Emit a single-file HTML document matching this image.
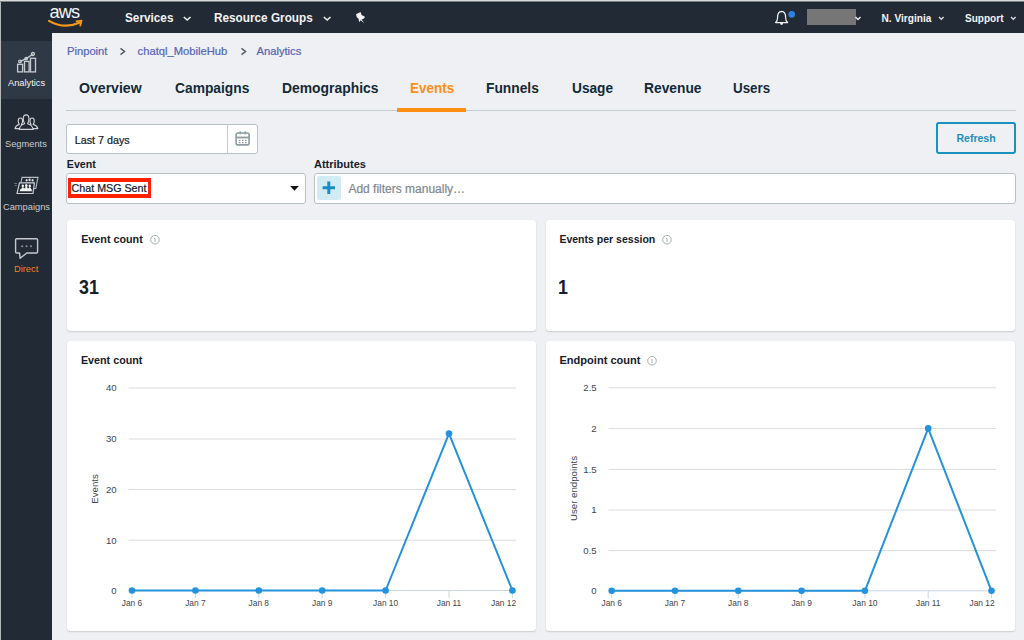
<!DOCTYPE html>
<html><head><meta charset="utf-8">
<style>
*{margin:0;padding:0;box-sizing:border-box}
html,body{width:1024px;height:640px;overflow:hidden;background:#eff0f3;font-family:"Liberation Sans",sans-serif;color:#16202b}
.a{position:absolute;white-space:nowrap;line-height:1}
.b{font-weight:bold}
.rg{-webkit-text-stroke:0.22px currentColor}
#topline{position:absolute;left:0;top:0;width:1024px;height:1px;background:#d9d9d9}#topline2{position:absolute;left:0;top:1px;width:1024px;height:1px;background:#7d8188}
#hdr{position:absolute;left:0;top:2px;width:1024px;height:31px;background:#222a36;border-top:1px solid #1c2330}
#side{position:absolute;left:0;top:33px;width:52px;height:607px;background:#222a36}
#leftline{position:absolute;left:0;top:2px;width:1px;height:638px;background:#b3b6ba}
#act{position:absolute;left:1px;top:41px;width:51px;height:58px;background:#2f3845}
.hw{color:#f2f3f3}
.sl{color:#c9ccd0;font-size:9.9px;transform:scaleX(0.94);transform-origin:0 0}
.bc{color:#5565b8;font-size:11.2px}
.tab{font-size:14px;font-weight:bold;color:#132a36}
.card{position:absolute;background:#fff;border-radius:3px;box-shadow:0 1px 1.5px rgba(0,0,0,.14),0 0 1px rgba(0,0,0,.10)}
.ct{font-size:10.8px;font-weight:bold;color:#16202b}
.lbl{font-size:11px;font-weight:bold;color:#16202b}
.field{position:absolute;background:#fff;border:1px solid #b8c3c6;border-radius:3px}

</style></head><body>
<div id="topline"></div><div id="topline2"></div>
<div id="hdr"></div>
<div id="side"></div>
<div id="act"></div>
<div id="leftline"></div>

<!-- header -->
<svg class="a" style="left:44px;top:3px" width="44" height="28" viewBox="0 0 44 28">
  <text x="5.5" y="15" font-family="Liberation Sans" font-size="18.3" fill="#f4f4f4" letter-spacing="-0.9">aws</text>
  <path d="M5 17.8 Q20 26.5 36 19.5" stroke="#f7981d" stroke-width="2.1" fill="none" stroke-linecap="round"/>
  <path d="M32.5 18.3 L37.6 17.6 L36.3 22.6" stroke="#f7981d" stroke-width="1.8" fill="none" stroke-linecap="round" stroke-linejoin="round"/>
</svg>
<div class="a b hw" style="left:125.2px;top:11.6px;font-size:12.8px;transform:scaleX(0.92);transform-origin:0 0">Services</div>
<svg class="a" style="left:182px;top:14px" width="10" height="8"><path d="M1.8 3 L5.2 6 L8.5 3" stroke="#eee" stroke-width="1.6" fill="none"/></svg>
<div class="a b hw" style="left:214.3px;top:11.6px;font-size:12.8px;transform:scaleX(0.92);transform-origin:0 0">Resource Groups</div>
<svg class="a" style="left:322px;top:14px" width="10" height="8"><path d="M1.8 3 L5.2 6 L8.5 3" stroke="#eee" stroke-width="1.6" fill="none"/></svg>
<svg class="a" style="left:354px;top:10px" width="14" height="15" viewBox="0 0 14 15">
  <path d="M2 4.2 L6.5 2 L7.6 5 L11.2 7 L9.2 9 L7.5 9.5 L10.5 13.2 L6.6 10.3 L5.2 12.2 L4.5 8.8 L2.8 7.2 Z" fill="#f2f2f2"/>
</svg>
<svg class="a" style="left:773px;top:9px" width="24" height="18" viewBox="0 0 24 18">
  <path d="M2.6 13.6 Q4.6 12.2 4.6 8.4 Q4.6 2.6 8.6 2.4 Q12.6 2.6 12.6 8.4 Q12.6 12.2 14.6 13.6 Z" stroke="#f0f0f0" stroke-width="1.2" fill="none" stroke-linejoin="round"/>
  <circle cx="8.6" cy="14.6" r="1.4" fill="#f0f0f0"/>
  <circle cx="18.7" cy="5.4" r="3.3" fill="#2f80e4"/>
</svg>
<div class="a" style="left:806.7px;top:9px;width:49.5px;height:16px;background:#767676"></div>
<svg class="a" style="left:854px;top:14px" width="8" height="8"><path d="M1.5 3 L4 5.5 L6.5 3" stroke="#eee" stroke-width="1.4" fill="none"/></svg>
<div class="a b hw" style="left:881.5px;top:14px;font-size:10.15px">N. Virginia</div>
<svg class="a" style="left:937px;top:14px" width="9" height="8"><path d="M2 3 L4.3 5.3 L6.6 3" stroke="#ddd" stroke-width="1.3" fill="none"/></svg>
<div class="a b hw" style="left:965px;top:14px;font-size:10.05px">Support</div>
<svg class="a" style="left:1009px;top:14px" width="9" height="8"><path d="M2 3 L4.3 5.3 L6.6 3" stroke="#ddd" stroke-width="1.3" fill="none"/></svg>

<!-- sidebar -->
<svg class="a" style="left:14px;top:51.4px" width="26" height="24" viewBox="0 0 26 24">
  <g stroke="#c8ccd1" stroke-width="1.3" fill="none">
    <rect x="3.6" y="13.3" width="5" height="7.6"/>
    <rect x="10.5" y="10.4" width="4.6" height="10.5"/>
    <rect x="16.5" y="7.3" width="5" height="13.6"/>
    <path d="M6.3 10.4 L12.2 7.6 L18.8 3.2"/>
    <circle cx="6" cy="10.4" r="1.3"/>
    <circle cx="12.2" cy="7.6" r="1.3"/>
    <circle cx="18.9" cy="3" r="1.5"/>
  </g>
</svg>
<div class="a sl" style="left:7.8px;top:78.2px;color:#f4f5f6">Analytics</div>
<svg class="a" style="left:0;top:100px" width="52" height="40" viewBox="0 100 52 40">
  <g transform="translate(12 0)" stroke="#d0d3d7" stroke-width="1.15" fill="#222a36" stroke-linejoin="round">
    <path d="M3 128.6 Q3.8 125.3 7.3 124.4 Q6.2 122.6 6.2 120.8 Q6.3 118 8.4 118 Q10.5 118 10.6 120.8 Q10.6 122.6 9.5 124.4 Q12.5 125.3 13.5 128.6 Z"/>
    <path d="M15 128.6 Q16 125.3 19 124.4 Q17.9 122.6 17.9 120.8 Q18 118 20.1 118 Q22.2 118 22.3 120.8 Q22.3 122.6 21.2 124.4 Q24.9 125.3 25.8 128.6 Z"/>
    <path d="M7.2 129.4 Q8.2 124.8 12.6 123.7 Q11.2 121.6 11.2 118.6 Q11.4 114.9 14.1 114.9 Q16.8 114.9 17 118.6 Q17 121.6 15.6 123.7 Q20.2 124.8 21.2 129.4 Z"/>
  </g>
</svg>
<div class="a sl" style="left:5.3px;top:139.2px">Segments</div>
<svg class="a" style="left:0;top:170px" width="52" height="30" viewBox="0 170 52 30">
  <path d="M22 177.4 L38 177.4 L35.8 188.5 L19.8 188.5 Z" stroke="#b9bdc3" stroke-width="1.1" fill="#222a36"/>
  <g fill="#d8dadd"><ellipse cx="26.6" cy="180.3" rx="1" ry="1.2"/><ellipse cx="29.6" cy="179.9" rx="1.1" ry="1.3"/><ellipse cx="32.6" cy="180.3" rx="1" ry="1.2"/>
  <path d="M25.5 182.5 h2.2 v1.2 h-2.2z M28.5 182.2 h2.3 v1.5 h-2.3z M31.6 182.5 h2.1 v1.2 h-2.1z"/></g>
  <path d="M36.6 180.5 L37.6 181 M35.6 186 L36.6 186.5" stroke="#8a8f96" stroke-width="0.8"/>
  <path d="M19.5 182.8 L34.4 182.8 L33 193.5 L17 193.5 Z" stroke="#c9ccd1" stroke-width="1.2" fill="#222a36"/>
  <g fill="#f3f3f3"><ellipse cx="22.8" cy="186" rx="1.2" ry="1.4"/><ellipse cx="26.3" cy="185.6" rx="1.3" ry="1.5"/><ellipse cx="29.8" cy="186" rx="1.2" ry="1.4"/>
  <path d="M19.6 191.2 Q19.8 188.6 22 188.3 L30.5 188.3 Q32.3 188.6 31.8 191.2 Z M21.5 189 Q21.6 187.2 22.8 187.2 Q24 187.2 24.1 189 Z M24.9 189 Q25 186.8 26.3 186.8 Q27.6 186.8 27.7 189 Z M28.5 189 Q28.6 187.2 29.8 187.2 Q31 187.2 31.1 189 Z"/></g>
  <path d="M14.2 183.5 h2.8 M14.8 185.5 h2" stroke="#6d727a" stroke-width="1.1"/>
</svg>
<div class="a sl" style="left:3.4px;top:202px">Campaigns</div>
<svg class="a" style="left:0;top:230px" width="52" height="34" viewBox="0 230 52 34">
  <path d="M16.6 238.8 L36.6 238.8 Q37.6 238.8 37.6 239.8 L37.6 252 Q37.6 253 36.6 253 L26.8 253 L20.1 258.3 L19.6 253 L16.6 253 Q15.6 253 15.6 252 L15.6 239.8 Q15.6 238.8 16.6 238.8 Z" stroke="#c5c9ce" stroke-width="1.4" fill="none" stroke-linejoin="round"/>
  <circle cx="22.2" cy="246.2" r="1.05" fill="#8d939a"/>
  <circle cx="26.6" cy="246.2" r="1.05" fill="#8d939a"/>
  <circle cx="31" cy="246.2" r="1.05" fill="#8d939a"/>
</svg>
<div class="a sl" style="left:13.9px;top:264px;color:#f0821d">Direct</div>

<!-- breadcrumb -->
<div class="a bc rg" style="left:67px;top:45.5px">Pinpoint</div>
<svg class="a" style="left:118px;top:46px" width="9" height="10"><path d="M2.5 2.3 L6.5 5.5 L2.5 8.6" stroke="#545b64" stroke-width="1.5" fill="none"/></svg>
<div class="a bc rg" style="left:137.6px;top:45.5px">chatql_MobileHub</div>
<svg class="a" style="left:239px;top:46px" width="9" height="10"><path d="M2.5 2.3 L6.5 5.5 L2.5 8.6" stroke="#545b64" stroke-width="1.5" fill="none"/></svg>
<div class="a bc rg" style="left:256.5px;top:45.5px">Analytics</div>

<!-- tabs -->
<div class="a tab" style="left:79px;top:80.2px;font-size:15.2px;transform:scaleX(0.9276);transform-origin:0 0">Overview</div>
<div class="a tab" style="left:174.7px;top:80.2px;font-size:15.2px;transform:scaleX(0.9079);transform-origin:0 0">Campaigns</div>
<div class="a tab" style="left:281.6px;top:80.2px;font-size:15.2px;transform:scaleX(0.9145);transform-origin:0 0">Demographics</div>
<div class="a tab" style="left:410px;top:80.2px;font-size:15.2px;transform:scaleX(0.8882);transform-origin:0 0;color:#fb8f1a">Events</div>
<div class="a tab" style="left:486.3px;top:80.2px;font-size:15.2px;transform:scaleX(0.9079);transform-origin:0 0">Funnels</div>
<div class="a tab" style="left:571.6px;top:80.2px;font-size:15.2px;transform:scaleX(0.9013);transform-origin:0 0">Usage</div>
<div class="a tab" style="left:644px;top:80.2px;font-size:15.2px;transform:scaleX(0.9079);transform-origin:0 0">Revenue</div>
<div class="a tab" style="left:733.4px;top:80.2px;font-size:15.2px;transform:scaleX(0.8816);transform-origin:0 0">Users</div>
<div class="a" style="left:66px;top:110px;width:950px;height:1px;background:#c6cdd0"></div>
<div class="a" style="left:397px;top:108px;width:69px;height:4px;background:#fd9012"></div>

<!-- date picker -->
<div class="field" style="left:66px;top:124px;width:192px;height:30px;background:#fff"></div>
<div class="a" style="left:227px;top:125px;width:1px;height:28px;background:#c3cccf"></div>
<svg class="a" style="left:226px;top:124px" width="32" height="30" viewBox="226 124 32 30">
  <rect x="236.1" y="133" width="13" height="11.9" rx="2" stroke="#8d9ca3" stroke-width="1.6" fill="none"/>
  <path d="M236.1 137.5 L249.1 137.5" stroke="#8d9ca3" stroke-width="1.8"/>
  <path d="M240.2 131.3 L240.2 134.6 M245.2 131.3 L245.2 134.6" stroke="#8d9ca3" stroke-width="1.3"/>
  <g fill="#8d9ca3"><rect x="238.8" y="139.8" width="1.6" height="1.3"/><rect x="241.9" y="139.8" width="1.6" height="1.3"/><rect x="245" y="139.8" width="1.6" height="1.3"/>
  <rect x="238.8" y="142" width="1.6" height="1.3"/><rect x="241.9" y="142" width="1.6" height="1.3"/><rect x="245" y="142" width="1.6" height="1.3"/></g>
</svg>
<div class="a rg" style="left:74.7px;top:134.9px;font-size:10.75px;color:#16202b">Last 7 days</div>

<!-- refresh -->
<div class="a" style="left:936px;top:122px;width:80px;height:32px;border:2px solid #1a91c1;border-radius:3px"></div>
<div class="a b" style="left:956.5px;top:132.7px;font-size:10.5px;color:#1a8fc0">Refresh</div>

<!-- event / attributes -->
<div class="a lbl" style="left:66.8px;top:159.1px;font-size:10.65px">Event</div>
<div class="a lbl" style="left:314px;top:159.1px;font-size:11px">Attributes</div>
<div class="field" style="left:66px;top:173px;width:240px;height:30.5px"></div>
<div class="a" style="left:67.6px;top:178px;width:83.5px;height:20px;border:solid #ff2200;border-width:4px 3.4px"></div>
<div class="a rg" style="left:71.6px;top:183.2px;font-size:10.7px;color:#16202b">Chat MSG Sent</div>
<svg class="a" style="left:288px;top:183px" width="12" height="10"><path d="M2.2 3 L10.8 3 L6.5 7.8 Z" fill="#111"/></svg>
<div class="field" style="left:313.5px;top:173px;width:702.5px;height:30.5px"></div>
<div class="a" style="left:317px;top:176.3px;width:23.6px;height:24px;background:#d3ebf4;border-radius:2px"></div>
<svg class="a" style="left:321px;top:180px" width="16" height="16"><path d="M7.8 1.6 L7.8 13.9 M1.6 7.8 L14 7.8" stroke="#1a8cbf" stroke-width="3"/></svg>
<div class="a rg" style="left:348.4px;top:182.6px;font-size:12px;color:#7f898f">Add filters manually…</div>

<!-- cards -->
<div class="card" style="left:66.7px;top:220px;width:469.6px;height:111.2px"></div>
<div class="card" style="left:545.5px;top:220px;width:469.8px;height:111.2px"></div>
<div class="card" style="left:66.7px;top:340.8px;width:469.6px;height:290.5px"></div>
<div class="card" style="left:545.5px;top:340.8px;width:469.8px;height:290.5px"></div>

<div class="a ct" style="left:81.2px;top:234.3px;font-size:10.75px">Event count</div>
<svg class="a" style="left:149px;top:234px" width="12" height="12"><circle cx="6" cy="5.7" r="4.3" stroke="#a6b0b3" stroke-width="1" fill="none"/><path d="M6 4.4 L6 8.1 M5.2 4.6 L6 4.2" stroke="#a6b0b3" stroke-width="1"/></svg>
<div class="a b" style="left:79.3px;top:277.6px;font-size:19.4px;color:#16202b;transform:scaleX(0.92);transform-origin:0 0">31</div>

<div class="a ct" style="left:559.4px;top:234.3px;font-size:10.53px">Events per session</div>
<svg class="a" style="left:661px;top:234px" width="12" height="12"><circle cx="6" cy="5.7" r="4.3" stroke="#a6b0b3" stroke-width="1" fill="none"/><path d="M6 4.4 L6 8.1 M5.2 4.6 L6 4.2" stroke="#a6b0b3" stroke-width="1"/></svg>
<div class="a b" style="left:558.3px;top:277.6px;font-size:19.4px;color:#16202b;transform:scaleX(0.92);transform-origin:0 0">1</div>

<div class="a ct" style="left:80.9px;top:354.5px;font-size:10.75px">Event count</div>
<div class="a ct" style="left:559.5px;top:354.5px;font-size:11.05px">Endpoint count</div>
<svg class="a" style="left:646.4px;top:354.8px" width="12" height="12"><circle cx="6" cy="5.7" r="4.3" stroke="#a6b0b3" stroke-width="1" fill="none"/><path d="M6 4.4 L6 8.1 M5.2 4.6 L6 4.2" stroke="#a6b0b3" stroke-width="1"/></svg>

<!-- chart 1 -->
<svg class="a" style="left:0;top:0" width="1024" height="640" viewBox="0 0 1024 640">
<g font-family="Liberation Sans" font-size="9.3" fill="#40464e">
<path d="M128.6 388 H516 M128.6 439 H516 M128.6 489.5 H516 M128.6 540.2 H516" stroke="#dcdcdc" stroke-width="1"/>
<path d="M128.6 590.5 H516" stroke="#c9d6e3" stroke-width="1"/>
<path d="M132 590.5 V598 M195.4 590.5 V598 M258.8 590.5 V598 M322.2 590.5 V598 M385.6 590.5 V598 M449 590.5 V598 M512.4 590.5 V598" stroke="#c9d6e3" stroke-width="1"/>
<text x="116.7" y="391.4" text-anchor="end" font-size="9.6">40</text>
<text x="116.7" y="442.4" text-anchor="end" font-size="9.6">30</text>
<text x="116.7" y="492.9" text-anchor="end" font-size="9.6">20</text>
<text x="116.7" y="543.6" text-anchor="end" font-size="9.6">10</text>
<text x="116.7" y="593.9" text-anchor="end" font-size="9.6">0</text>
<text transform="translate(132 606) scale(0.9 1)" text-anchor="middle">Jan 6</text>
<text transform="translate(195.4 606) scale(0.9 1)" text-anchor="middle">Jan 7</text>
<text transform="translate(258.8 606) scale(0.9 1)" text-anchor="middle">Jan 8</text>
<text transform="translate(322.2 606) scale(0.9 1)" text-anchor="middle">Jan 9</text>
<text transform="translate(385.6 606) scale(0.9 1)" text-anchor="middle">Jan 10</text>
<text transform="translate(449 606) scale(0.9 1)" text-anchor="middle">Jan 11</text>
<text transform="translate(503.5 606) scale(0.9 1)" text-anchor="middle">Jan 12</text>
<text transform="translate(98.3 489) rotate(-90)" text-anchor="middle" font-size="9.7">Events</text>
<path d="M608.6 387.8 H996 M608.6 428.6 H996 M608.6 469.4 H996 M608.6 510 H996 M608.6 550.6 H996" stroke="#dcdcdc" stroke-width="1"/>
<path d="M608.6 590.8 H996" stroke="#c9d6e3" stroke-width="1"/>
<path d="M611.7 590.8 V598 M675 590.8 V598 M738.3 590.8 V598 M801.6 590.8 V598 M864.9 590.8 V598 M928.2 590.8 V598 M991.5 590.8 V598" stroke="#c9d6e3" stroke-width="1"/>
<text x="596.7" y="391.2" text-anchor="end" font-size="9.6">2.5</text>
<text x="596.7" y="432.0" text-anchor="end" font-size="9.6">2</text>
<text x="596.7" y="472.79999999999995" text-anchor="end" font-size="9.6">1.5</text>
<text x="596.7" y="513.4" text-anchor="end" font-size="9.6">1</text>
<text x="596.7" y="554.0" text-anchor="end" font-size="9.6">0.5</text>
<text x="596.7" y="594.1999999999999" text-anchor="end" font-size="9.6">0</text>
<text transform="translate(611.7 606) scale(0.9 1)" text-anchor="middle">Jan 6</text>
<text transform="translate(675 606) scale(0.9 1)" text-anchor="middle">Jan 7</text>
<text transform="translate(738.3 606) scale(0.9 1)" text-anchor="middle">Jan 8</text>
<text transform="translate(801.6 606) scale(0.9 1)" text-anchor="middle">Jan 9</text>
<text transform="translate(864.9 606) scale(0.9 1)" text-anchor="middle">Jan 10</text>
<text transform="translate(928.2 606) scale(0.9 1)" text-anchor="middle">Jan 11</text>
<text transform="translate(982 606) scale(0.9 1)" text-anchor="middle">Jan 12</text>
<text transform="translate(576.5 488.5) rotate(-90)" text-anchor="middle" font-size="9.7">User endpoints</text>
</g>
<path d="M132.0 590.5 L195.4 590.5 L258.8 590.5 L322.2 590.5 L385.6 590.5 L449.0 433.6 L512.4 590.5" stroke="#2592dc" stroke-width="2" fill="none" stroke-linejoin="round"/>
<g fill="#2592dc"><circle cx="132.0" cy="590.5" r="3.3"/><circle cx="195.4" cy="590.5" r="3.3"/><circle cx="258.8" cy="590.5" r="3.3"/><circle cx="322.2" cy="590.5" r="3.3"/><circle cx="385.6" cy="590.5" r="3.3"/><circle cx="449.0" cy="433.6" r="3.3"/><circle cx="512.4" cy="590.5" r="3.3"/></g>
<path d="M611.7 590.8 L675.0 590.8 L738.3 590.8 L801.6 590.8 L864.9 590.8 L928.2 428.4 L991.5 590.8" stroke="#2592dc" stroke-width="2" fill="none" stroke-linejoin="round"/>
<g fill="#2592dc"><circle cx="611.7" cy="590.8" r="3.3"/><circle cx="675.0" cy="590.8" r="3.3"/><circle cx="738.3" cy="590.8" r="3.3"/><circle cx="801.6" cy="590.8" r="3.3"/><circle cx="864.9" cy="590.8" r="3.3"/><circle cx="928.2" cy="428.4" r="3.3"/><circle cx="991.5" cy="590.8" r="3.3"/></g>
</svg>
</body></html>
